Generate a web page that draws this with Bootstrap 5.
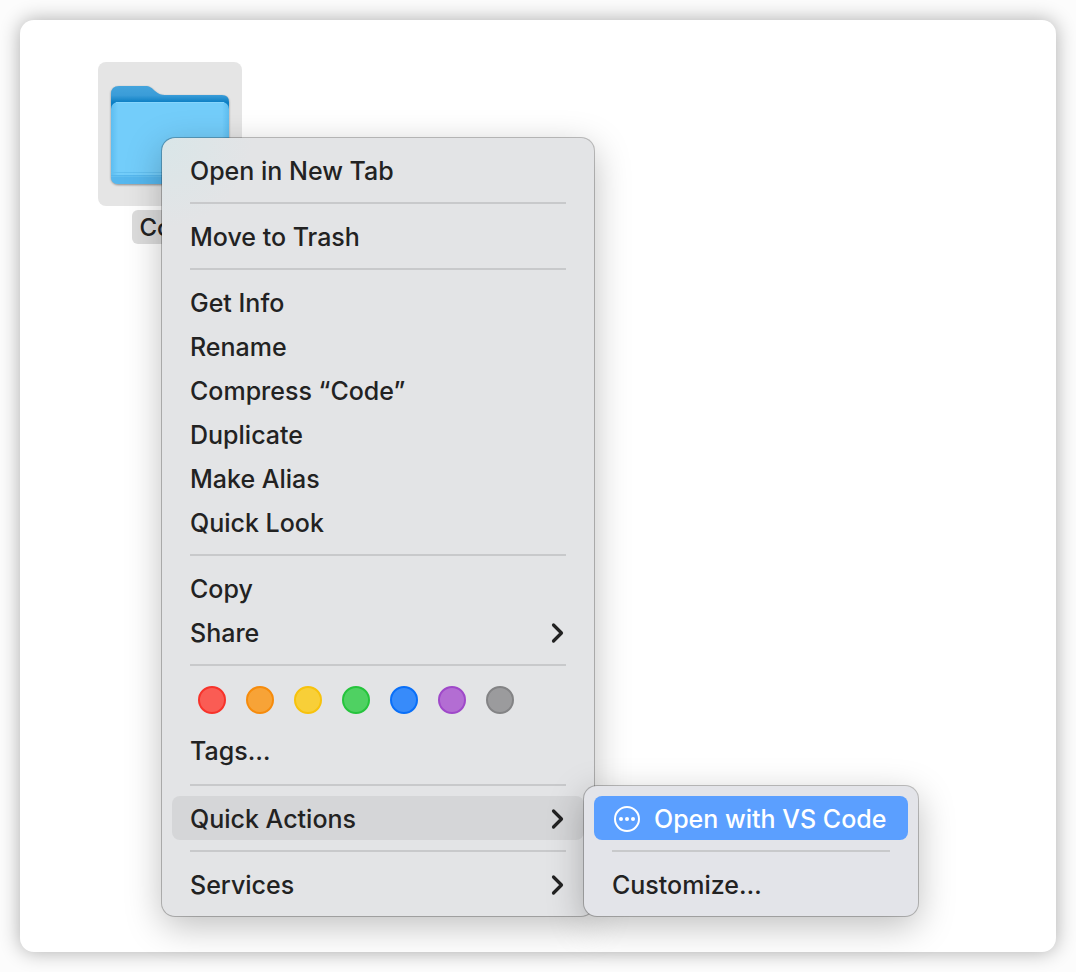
<!DOCTYPE html>
<html lang="en">
<head>
<meta charset="utf-8">
<meta name="viewport" content="width=device-width, initial-scale=1">
<title>Finder context menu</title>
<link href="https://cdn.jsdelivr.net/npm/bootstrap@5.3.0/dist/css/bootstrap.min.css" rel="stylesheet">
<style>
  body { background: #fcfcfc; font-family: Inter, sans-serif; font-size: 25px; line-height: 44px; color: #222; padding: 20px; }
  .finder { min-height: calc(100vh - 40px); padding: 42px 78px; border-radius: 14px; background: #fff; box-shadow: 0 0 20px rgba(0,0,0,.32); }
  .file { width: 144px; }
  .file-icon { background: #e5e5e5; border-radius: 8px; }
  .file-name { background: #dcdcdc; border-radius: 6px; padding: 2px 7px 0; font-size: 24px; font-weight: 450; line-height: 32px; }
  .glass { --bs-dropdown-padding-x: 10px; --bs-dropdown-padding-y: 10px; --bs-dropdown-border-width: 0; --bs-dropdown-border-radius: 13px;
    --bs-dropdown-bg: #e3e4e6; --bs-dropdown-link-color: #222; --bs-dropdown-font-size: 25px;
    --bs-dropdown-item-padding-x: 18px; --bs-dropdown-item-padding-y: 0;
    --bs-dropdown-link-hover-bg: #d5d6d8; --bs-dropdown-link-hover-color: #222;
    --bs-dropdown-link-active-bg: #5b9fff; --bs-dropdown-link-active-color: #fff;
    padding: 10px; box-shadow: 0 0 0 1px rgba(0,0,0,.24), 0 10px 36px rgba(0,0,0,.26); }
  .glass .dropdown-item { border-radius: 8px; padding-top: 2px; line-height: 42px; height: 44px; font-weight: 450; }
  .glass .dropdown-item.active { font-weight: 500; }
  .glass .dropdown-divider { margin: 10px 18px; border-top: 2px solid #c8c9cb; opacity: 1; }
  .main-menu { top: 76px; left: 64px; width: 432px; background-image: radial-gradient(circle at 0 0, #d9e6e8, #e3e4e6 90px); }
  .sub-menu { top: -10px; left: 100%; width: 334px; background: #e3e4e9; }
  .glass .dropdown-item.opened { background: #d5d6d8; }
  .action-icon { margin: 0 13px 0 1px; }
  .tag-row { padding: 10px 26px 14px; gap: 20px; }
  .tag-names { margin-bottom: 12px; }
  .tag-dot { width: 28px; height: 28px; border-radius: 50%; padding: 0; border: 2px solid var(--ring); background: var(--fill); }
</style>
</head>
<body>
<main class="finder">
  <div class="file position-relative d-flex flex-column align-items-center">
    <div class="file-icon mb-1">
      <svg class="d-block" width="144" height="144" viewBox="0 0 144 144" role="img" aria-label="Folder">
        <defs>
          <linearGradient id="back" x1="0" y1="23" x2="0" y2="46" gradientUnits="userSpaceOnUse">
            <stop offset="0" stop-color="#45a5dd"/><stop offset=".45" stop-color="#3a9cd8"/><stop offset=".75" stop-color="#0c7fc4"/>
          </linearGradient>
          <linearGradient id="front" x1="0" y1="0" x2="1" y2="0">
            <stop offset="0" stop-color="#5dbdf0"/><stop offset=".06" stop-color="#73cdfa"/><stop offset=".94" stop-color="#73cdfa"/><stop offset="1" stop-color="#5dbdf0"/>
          </linearGradient>
          <filter id="soft" x="-10%" y="-10%" width="120%" height="120%" color-interpolation-filters="sRGB"><feDropShadow dx="0" dy="1" stdDeviation="1" flood-opacity=".4"/></filter>
        </defs>
        <g filter="url(#soft)">
          <path d="M13 32q0-8 8-8h26c5 0 7 2 10 5 4 3 6 4 10 4h57q7 0 7 7v70H13z" fill="url(#back)"/>
          <rect x="13" y="40" width="118" height="82" rx="7" fill="url(#front)"/>
        </g>
        <path d="M13 113h118v2q0 7-7 7H20q-7 0-7-7z" fill="#56b7ee"/>
        <path d="M13 110.500h118M13 114.500h118" stroke="#62bff0" stroke-width="1"/>
        <path d="M18 40.500h108" stroke="#86d5fc" stroke-width="1"/>
      </svg>
    </div>
    <span class="file-name">Code</span>

    <ul class="dropdown-menu show glass main-menu">
      <li><button type="button" class="dropdown-item">Open in New Tab</button></li>
      <li><hr class="dropdown-divider"></li>
      <li><button type="button" class="dropdown-item">Move to Trash</button></li>
      <li><hr class="dropdown-divider"></li>
      <li><button type="button" class="dropdown-item">Get Info</button></li>
      <li><button type="button" class="dropdown-item">Rename</button></li>
      <li><button type="button" class="dropdown-item">Compress “Code”</button></li>
      <li><button type="button" class="dropdown-item">Duplicate</button></li>
      <li><button type="button" class="dropdown-item">Make Alias</button></li>
      <li><button type="button" class="dropdown-item">Quick Look</button></li>
      <li><hr class="dropdown-divider"></li>
      <li><button type="button" class="dropdown-item">Copy</button></li>
      <li><button type="button" class="dropdown-item d-flex justify-content-between align-items-center">Share
        <svg width="16" height="22" viewBox="0 0 16 22" fill="none" stroke="#222" stroke-width="3.200" stroke-linecap="round" stroke-linejoin="round" aria-hidden="true"><path d="M3.500 3l8 8-8 8"/></svg></button></li>
      <li><hr class="dropdown-divider"></li>
      <li class="tag-row d-flex">
        <button type="button" class="tag-dot" aria-label="Red" style="--fill:#fa5c54;--ring:#f7332b"></button>
        <button type="button" class="tag-dot" aria-label="Orange" style="--fill:#f7a337;--ring:#f68b0c"></button>
        <button type="button" class="tag-dot" aria-label="Yellow" style="--fill:#f8cf38;--ring:#f7c20c"></button>
        <button type="button" class="tag-dot" aria-label="Green" style="--fill:#4fd162;--ring:#25c43c"></button>
        <button type="button" class="tag-dot" aria-label="Blue" style="--fill:#378bfa;--ring:#096ff8"></button>
        <button type="button" class="tag-dot" aria-label="Purple" style="--fill:#b36dd3;--ring:#9f48c9"></button>
        <button type="button" class="tag-dot" aria-label="Gray" style="--fill:#9b9b9d;--ring:#838385"></button>
      </li>
      <li class="tag-names"><button type="button" class="dropdown-item">Tags…</button></li>
      <li><hr class="dropdown-divider"></li>
      <li class="position-relative">
        <button type="button" class="dropdown-item opened d-flex justify-content-between align-items-center" aria-expanded="true">Quick Actions
          <svg width="16" height="22" viewBox="0 0 16 22" fill="none" stroke="#222" stroke-width="3.200" stroke-linecap="round" stroke-linejoin="round" aria-hidden="true"><path d="M3.500 3l8 8-8 8"/></svg></button>
        <ul class="dropdown-menu show glass sub-menu">
          <li><button type="button" class="dropdown-item active d-flex align-items-center">
            <svg class="action-icon" width="28" height="28" viewBox="0 0 28 28" aria-hidden="true"><circle cx="14" cy="14" r="12" fill="none" stroke="#fff" stroke-width="2"/><g fill="#fff"><circle cx="8" cy="14" r="2"/><circle cx="14" cy="14" r="2"/><circle cx="20" cy="14" r="2"/></g></svg>Open with VS Code</button></li>
          <li><hr class="dropdown-divider"></li>
          <li><button type="button" class="dropdown-item">Customize…</button></li>
        </ul>
      </li>
      <li><hr class="dropdown-divider"></li>
      <li><button type="button" class="dropdown-item d-flex justify-content-between align-items-center">Services
        <svg width="16" height="22" viewBox="0 0 16 22" fill="none" stroke="#222" stroke-width="3.200" stroke-linecap="round" stroke-linejoin="round" aria-hidden="true"><path d="M3.500 3l8 8-8 8"/></svg></button></li>
    </ul>
  </div>
</main>
<script src="https://cdn.jsdelivr.net/npm/bootstrap@5.3.0/dist/js/bootstrap.bundle.min.js"></script>
</body>
</html>
